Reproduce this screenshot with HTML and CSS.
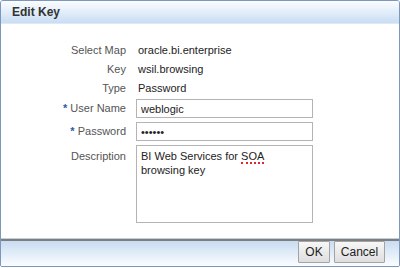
FILE: index.html
```html
<!DOCTYPE html>
<html lang="en">
<head>
    <meta charset="UTF-8">
    <title>Edit Key</title>
    <link rel="stylesheet" href="styles.css">
</head>
<body>

<div class="dialog">
    <div class="dialog-title">Edit Key</div>

    <div class="dialog-body">
        <div class="row">
            <span class="label">Select Map</span>
            <span class="value">oracle.bi.enterprise</span>
        </div>
        <div class="row">
            <span class="label">Key</span>
            <span class="value">wsil.browsing</span>
        </div>
        <div class="row">
            <span class="label">Type</span>
            <span class="value">Password</span>
        </div>
        <div class="row row-input">
            <label class="label" for="username"><span class="req">*</span> User Name</label>
            <input class="field" type="text" id="username" value="weblogic">
        </div>
        <div class="row row-input row-gap">
            <label class="label" for="password"><span class="req">*</span> Password</label>
            <input class="field" type="password" id="password" value="secret">
        </div>
        <div class="row row-area row-gap">
            <span class="label">Description</span>
            <div class="field area">BI Web Services for <span class="spell">SOA</span> browsing key</div>
        </div>
    </div>

    <div class="dialog-footer">
        <button class="btn btn-ok">OK</button>
        <button class="btn btn-cancel">Cancel</button>
    </div>
</div>

</body>
</html>
```

FILE: styles.css
```css
body {
    margin: 0;
    background-color: #ffffff;
    font-family: "Liberation Sans", Arial, sans-serif;
    font-size: 11px;
}
.dialog {
    box-sizing: border-box;
    width: 400px;
    height: 267px;
    border: 1px solid #7b97bc;
    border-radius: 3px 3px 2px 2px;
    display: flex;
    flex-direction: column;
    overflow: hidden;
}
.dialog-title {
    height: 22px;
    line-height: 22px;
    padding-left: 11px;
    font-size: 12px;
    font-weight: bold;
    color: #333333;
    background: linear-gradient(#fbfdff, #c9ddf3);
    border-bottom: 1px solid #dce9f7;
}
.dialog-body {
    flex: 1;
    padding-top: 17px;
}
.row {
    display: flex;
    align-items: center;
    height: 19px;
}
.label {
    width: 125px;
    text-align: right;
    color: #555555;
    line-height: 19px;
    padding-right: 10px;
}
.value {
    padding-left: 2px;
    color: #222222;
    line-height: 19px;
}
.req {
    color: #2c5aa6;
    font-weight: bold;
}
.row-input {
    margin-top: 1px;
}
.row-gap {
    margin-top: 4px;
}
.field {
    box-sizing: border-box;
    width: 177px;
    height: 19px;
    margin: 0;
    padding: 0 4px;
    border: 1px solid #b4b4b4;
    font-family: "Liberation Sans", Arial, sans-serif;
    font-size: 11px;
    color: #222222;
    background: #ffffff;
    outline: none;
}
.row-area {
    height: 78px;
    align-items: flex-start;
}
.row-area .label {
    line-height: 14px;
    padding-top: 4px;
}
.area {
    height: 78px;
    padding: 3px 4px;
    line-height: 14px;
}
.spell {
    border-bottom: 2px dotted #e0262b;
}
.dialog-footer {
    height: 25px;
    border-top: 2px solid #7e7e7e;
    box-shadow: 0 -1px 0 #c6cedb;
    background: linear-gradient(#c8dcf2, #fbfdff);
    display: flex;
    justify-content: flex-end;
    align-items: flex-start;
    gap: 4px;
    padding-right: 14px;
}
.btn {
    height: 22px;
    padding: 0;
    border: 1px solid #a3a3a3;
    border-radius: 1px;
    background: linear-gradient(#f7f7f7, #dedede);
    font-family: "Liberation Sans", Arial, sans-serif;
    font-size: 12px;
    color: #222222;
    cursor: pointer;
}
.btn-ok {
    width: 32px;
}
.btn-cancel {
    width: 51px;
}
```
